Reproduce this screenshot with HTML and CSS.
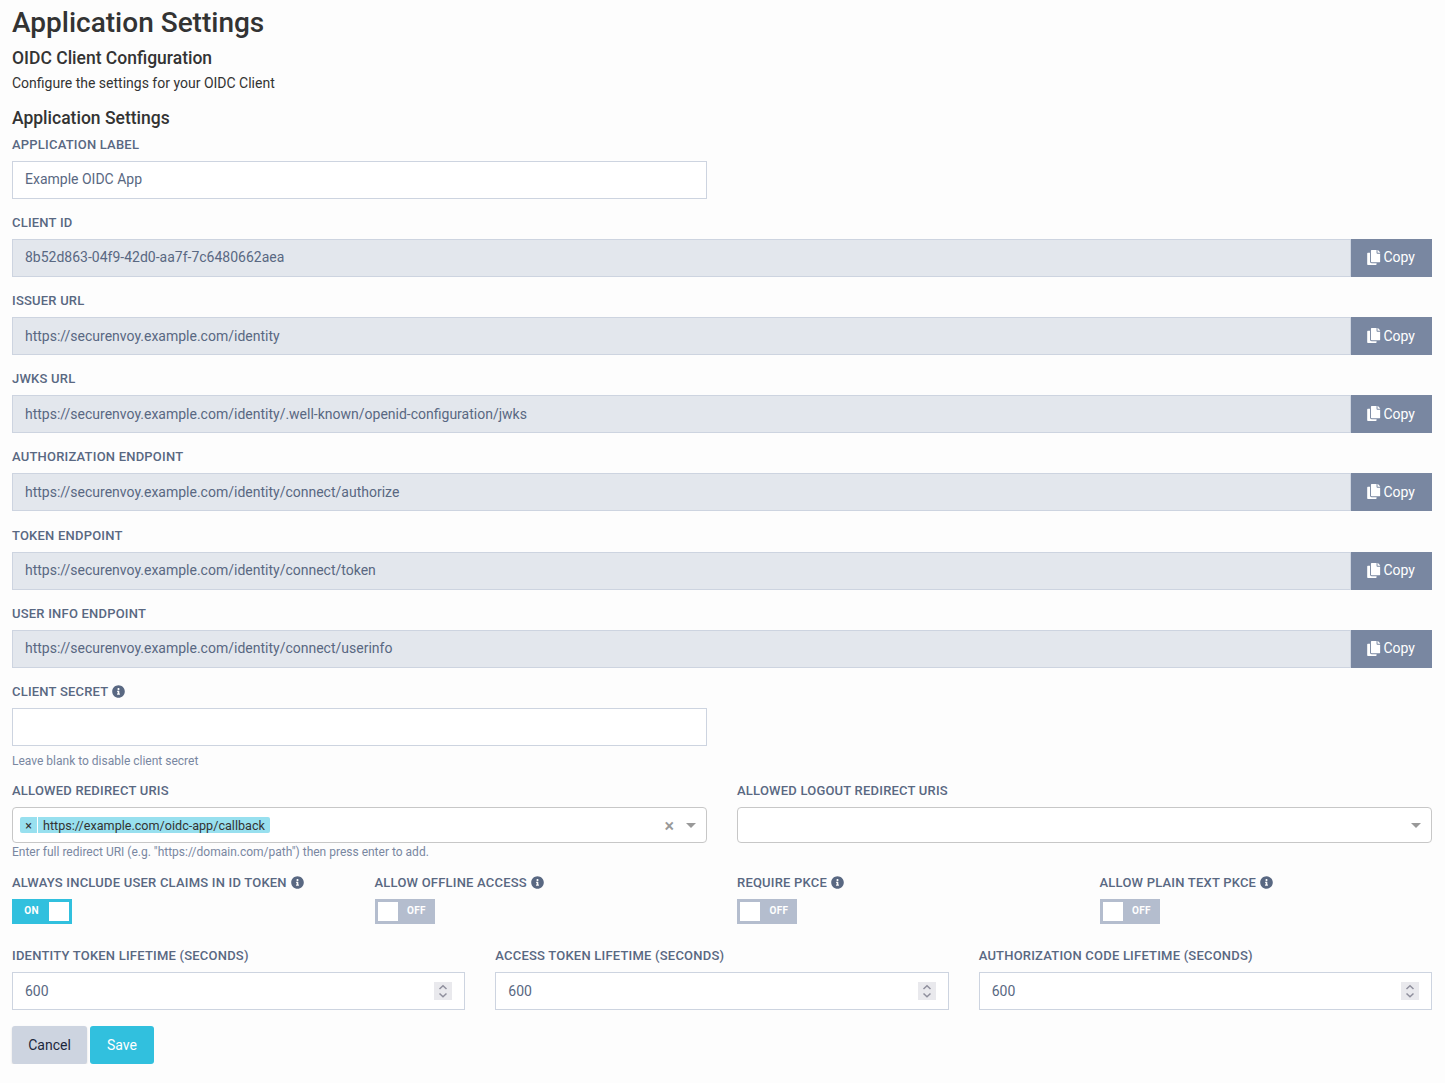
FILE: index.html
```html
<!DOCTYPE html>
<html lang="en">
<head>
<meta charset="utf-8">
<title>Application Settings</title>
<link rel="stylesheet" href="styles.css">
</head>
<body>
<svg class="defs" aria-hidden="true">
  <symbol id="copy" viewBox="0 0 448 512"><path d="M320 448v40c0 13.255-10.745 24-24 24H24c-13.255 0-24-10.745-24-24V120c0-13.255 10.745-24 24-24h72v296c0 30.879 25.121 56 56 56h168zm0-344V0H152c-13.255 0-24 10.745-24 24v368c0 13.255 10.745 24 24 24h272c13.255 0 24-10.745 24-24V128H344c-13.2 0-24-10.8-24-24zm120.971-31.029L375.029 7.029A24 24 0 0 0 358.059 0H352v96h96v-6.059a24 24 0 0 0-7.029-16.97z"/></symbol>
  <symbol id="info" viewBox="0 0 512 512"><path d="M256 8C119.043 8 8 119.083 8 256c0 136.997 111.043 248 248 248s248-111.003 248-248C504 119.083 392.957 8 256 8zm0 110c23.196 0 42 18.804 42 42s-18.804 42-42 42-42-18.804-42-42 18.804-42 42-42zm56 254c0 6.627-5.373 12-12 12h-88c-6.627 0-12-5.373-12-12v-24c0-6.627 5.373-12 12-12h12v-64h-12c-6.627 0-12-5.373-12-12v-24c0-6.627 5.373-12 12-12h64c6.627 0 12 5.373 12 12v100h12c6.627 0 12 5.373 12 12v24z"/></symbol>
  <symbol id="spin" viewBox="0 0 18 18"><path d="M5.5 7 9 3.800 12.500 7M5.500 11.500l3.500 3.200 3.500-3.200" fill="none" stroke="#8f8f9d" stroke-width="1.500"/></symbol>
</svg>
<main class="page">
  <h1 class="title">Application Settings</h1>
  <h2 class="subtitle">OIDC Client Configuration</h2>
  <p class="intro">Configure the settings for your OIDC Client</p>
  <h2 class="subtitle section">Application Settings</h2>

  <div class="field">
    <label class="label">Application Label</label>
    <input class="input half" value="Example OIDC App">
  </div>
  <div class="field">
    <label class="label">Client ID</label>
    <div class="group"><input class="input readonly" readonly value="8b52d863-04f9-42d0-aa7f-7c6480662aea"><button class="copy"><svg class="copy-icon"><use href="#copy"/></svg>Copy</button></div>
  </div>
  <div class="field">
    <label class="label">Issuer URL</label>
    <div class="group"><input class="input readonly" readonly value="https://securenvoy.example.com/identity"><button class="copy"><svg class="copy-icon"><use href="#copy"/></svg>Copy</button></div>
  </div>
  <div class="field">
    <label class="label">JWKS URL</label>
    <div class="group"><input class="input readonly" readonly value="https://securenvoy.example.com/identity/.well-known/openid-configuration/jwks"><button class="copy"><svg class="copy-icon"><use href="#copy"/></svg>Copy</button></div>
  </div>
  <div class="field">
    <label class="label">Authorization Endpoint</label>
    <div class="group"><input class="input readonly" readonly value="https://securenvoy.example.com/identity/connect/authorize"><button class="copy"><svg class="copy-icon"><use href="#copy"/></svg>Copy</button></div>
  </div>
  <div class="field">
    <label class="label">Token Endpoint</label>
    <div class="group"><input class="input readonly" readonly value="https://securenvoy.example.com/identity/connect/token"><button class="copy"><svg class="copy-icon"><use href="#copy"/></svg>Copy</button></div>
  </div>
  <div class="field">
    <label class="label">User Info Endpoint</label>
    <div class="group"><input class="input readonly" readonly value="https://securenvoy.example.com/identity/connect/userinfo"><button class="copy"><svg class="copy-icon"><use href="#copy"/></svg>Copy</button></div>
  </div>
  <div class="field secret">
    <label class="label">Client Secret <svg class="info"><use href="#info"/></svg></label>
    <input class="input half">
    <p class="help">Leave blank to disable client secret</p>
  </div>

  <div class="row cols-2">
    <div>
      <label class="label">Allowed Redirect URIs</label>
      <div class="select">
        <span class="tag"><span class="tag-remove">×</span><span class="tag-text">https://example.com/oidc-app/callback</span></span>
        <span class="clear">×</span><span class="arrow"></span>
      </div>
      <p class="help tight">Enter full redirect URI (e.g. "https://domain.com/path") then press enter to add.</p>
    </div>
    <div>
      <label class="label">Allowed Logout Redirect URIs</label>
      <div class="select"><span class="arrow"></span></div>
    </div>
  </div>

  <div class="row cols-4">
    <div>
      <label class="label">Always include user claims in ID token <svg class="info"><use href="#info"/></svg></label>
      <div class="toggle on"><span class="state">ON</span><span class="knob"></span></div>
    </div>
    <div>
      <label class="label">Allow offline access <svg class="info"><use href="#info"/></svg></label>
      <div class="toggle"><span class="knob"></span><span class="state">OFF</span></div>
    </div>
    <div>
      <label class="label">Require PKCE <svg class="info"><use href="#info"/></svg></label>
      <div class="toggle"><span class="knob"></span><span class="state">OFF</span></div>
    </div>
    <div>
      <label class="label">Allow plain text PKCE <svg class="info"><use href="#info"/></svg></label>
      <div class="toggle"><span class="knob"></span><span class="state">OFF</span></div>
    </div>
  </div>

  <div class="row cols-3">
    <div>
      <label class="label">Identity token lifetime (seconds)</label>
      <div class="input number"><span>600</span><svg class="spinner"><use href="#spin"/></svg></div>
    </div>
    <div>
      <label class="label">Access token lifetime (seconds)</label>
      <div class="input number"><span>600</span><svg class="spinner"><use href="#spin"/></svg></div>
    </div>
    <div>
      <label class="label">Authorization code lifetime (seconds)</label>
      <div class="input number"><span>600</span><svg class="spinner"><use href="#spin"/></svg></div>
    </div>
  </div>

  <div class="actions"><button class="btn cancel">Cancel</button><button class="btn save">Save</button></div>
</main>
</body>
</html>
```
FILE: styles.css
```css
* { box-sizing: border-box; }
html { overflow: hidden; }
body {
  margin: 0;
  background: #fdfdfd;
  color: #333;
  font-family: Roboto, "Liberation Sans", sans-serif;
  font-size: 14px;
  line-height: 21px;
}
input, button { font: inherit; margin: 0; }
.defs { display: none; }
.page { padding: 6px 13px 0 12px; }
.title { margin: 0; font-size: 28px; font-weight: 500; line-height: 34px; }
.subtitle { margin: 8px 0 0; font-size: 17.5px; font-weight: 500; line-height: 21px; }
.intro { margin: 4px 0 0; }
.section { margin-top: 14px; }
.subtitle.section { margin-bottom: 5.8px; }

.field { height: 78.15px; }
.label {
  display: flex;
  align-items: center;
  height: 20px;
  margin-bottom: 6px;
  color: #596882;
  font-size: 13px;
  font-weight: 500;
  line-height: 20px;
  letter-spacing: 0.21px;
  text-transform: uppercase;
  white-space: pre;
}
.info { width: 13px; height: 13px; margin: -1px 0 0 0.6px; fill: #596882; }
.input {
  display: block;
  width: 100%;
  height: 38px;
  padding: 0 12px 1.1px;
  border: 1px solid #cdd4e0;
  border-radius: 0;
  background: #fff;
  color: #596882;
  outline: 0;
}
.half { width: 695px; }
.readonly { flex: 1; background: #e3e7ed; }
.group { display: flex; }
.copy {
  display: flex;
  align-items: center;
  justify-content: center;
  gap: 2.5px;
  width: 81px;
  height: 38px;
  padding: 0;
  border: 0;
  background: #7987a1;
  color: #fff;
}
.copy-icon { width: 13.5px; height: 15px; margin: -1px 0 0 -0.6px; fill: #fff; }
.help { margin: 5px 0 0; color: #7987a1; font-size: 12px; line-height: 20px; }
.help.tight { margin: 0; line-height: 18px; }
.secret { height: 99.4px; }

.row { display: grid; column-gap: 30px; }
.cols-2 { grid-template-columns: repeat(2, 1fr); height: 91.7px; }
.cols-4 { grid-template-columns: repeat(4, 1fr); height: 73.3px; }
.cols-3 { grid-template-columns: repeat(3, 1fr); height: 80px; }

.select {
  display: flex;
  align-items: center;
  height: 36px;
  padding: 0 10px 0 7px;
  border: 1px solid #c7c7c7;
  border-radius: 4px;
  background: #fff;
}
.tag { display: flex; height: 16px; color: #333; font-size: 12.6px; line-height: 17px; }
.tag-remove { width: 17px; margin-right: 1px; border-radius: 2px 0 0 2px; background: #98e0ef; text-align: center; }
.tag-text { padding: 0 5px; border-radius: 0 2px 2px 0; background: #98e0ef; }
.clear { margin-left: auto; color: #999; font-size: 18px; font-weight: 500; }
.arrow { margin-left: auto; border: 5px solid transparent; border-top-color: #999; border-bottom: 0; }
.clear + .arrow { margin-left: 12px; }

.toggle {
  display: flex;
  align-items: center;
  width: 60px;
  height: 25px;
  padding: 3px;
  background: #b4bdce;
  color: #fff;
  font-size: 10px;
  font-weight: 700;
  letter-spacing: 0.3px;
  line-height: 18px;
}
.on { background: #31c0de; }
.knob { width: 20px; height: 19px; background: #fff; }
.state { flex: 1; padding: 0 1px 1px 0; text-align: center; }
.knob + .state { padding: 0 0 1px 4px; }

.number { display: flex; align-items: center; justify-content: space-between; padding-bottom: 0; }
.spinner { width: 18px; height: 18px; background: #e9e9ed; }

.actions { display: flex; gap: 3px; }
.btn { height: 38px; padding: 1px 0 0; border: 0; border-radius: 3px; }
.cancel { width: 75px; background: #cdd4e0; color: #1c273c; box-shadow: 0 1px 2px rgba(0, 0, 0, 0.15); }
.save { width: 64px; background: #31c0de; color: #fff; }
```
